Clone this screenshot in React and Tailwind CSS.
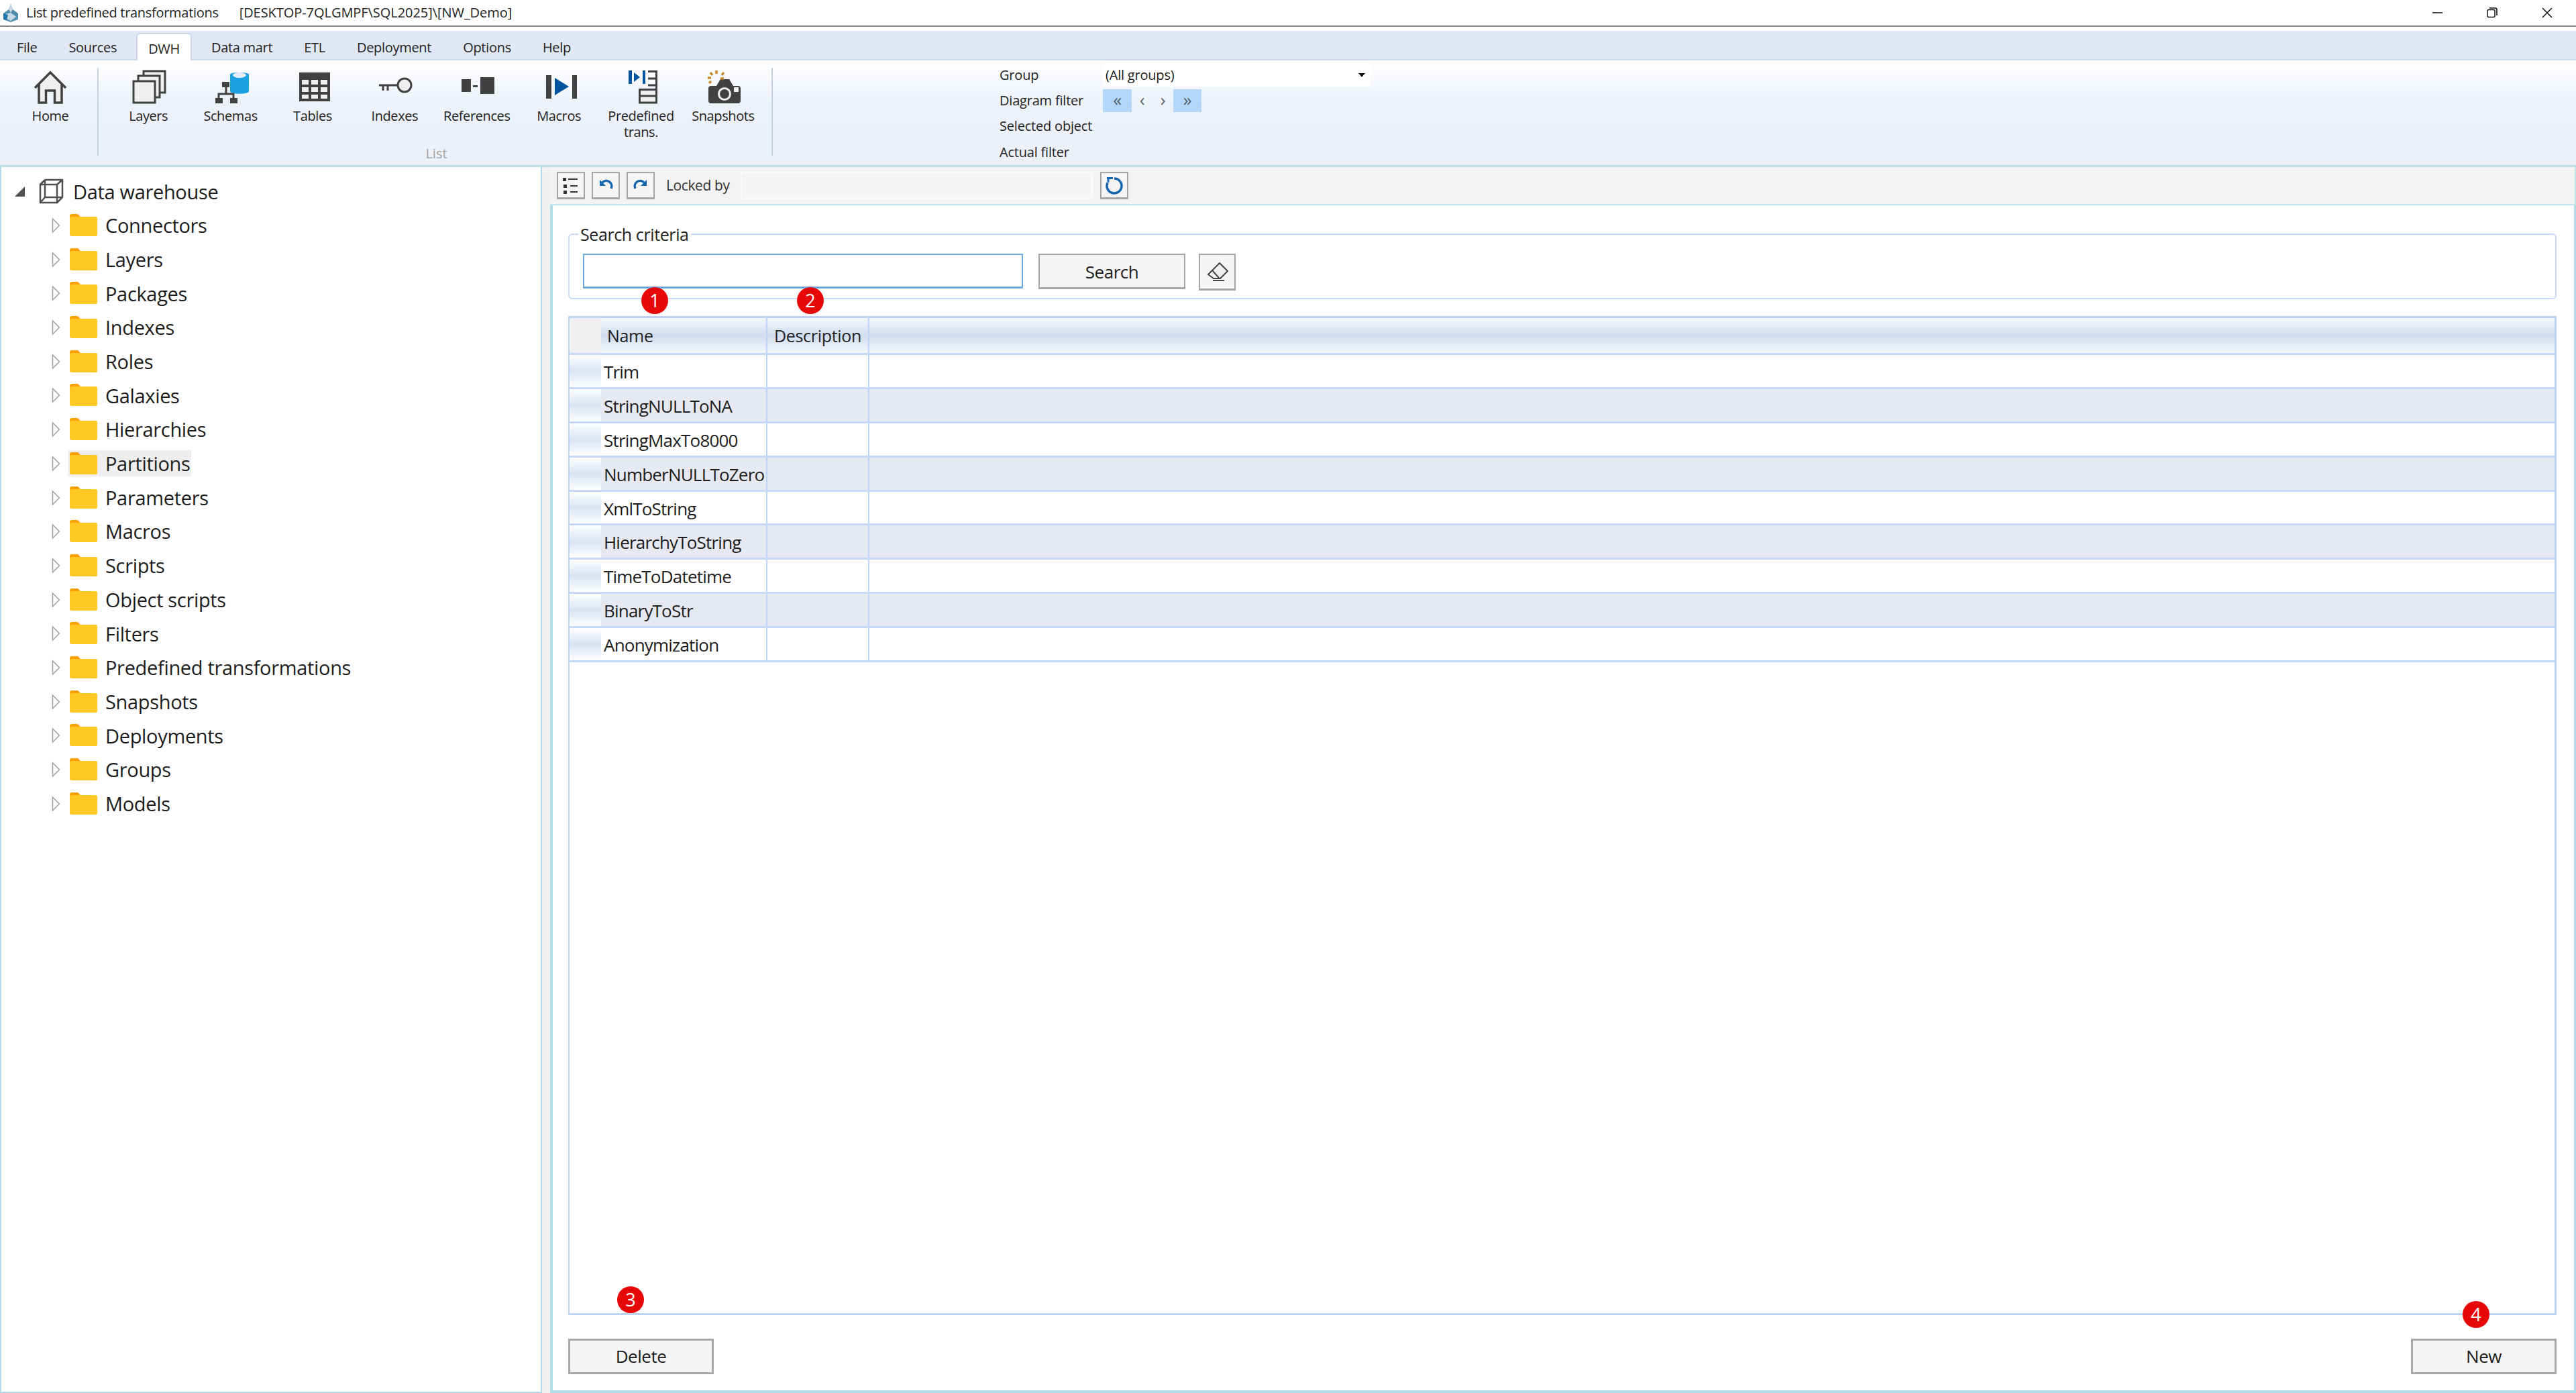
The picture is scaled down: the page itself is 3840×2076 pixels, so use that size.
const font = { fontFamily: '"Open Sans", "Noto Sans", sans-serif' };

const tabs = ["File", "Sources", "DWH", "Data mart", "ETL", "Deployment", "Options", "Help"];
const treeItems = ["Connectors", "Layers", "Packages", "Indexes", "Roles", "Galaxies", "Hierarchies", "Partitions", "Parameters", "Macros", "Scripts", "Object scripts", "Filters", "Predefined transformations", "Snapshots", "Deployments", "Groups", "Models"];
const rows = ["Trim", "StringNULLToNA", "StringMaxTo8000", "NumberNULLToZero", "XmlToString", "HierarchyToString", "TimeToDatetime", "BinaryToStr", "Anonymization"];

const D = "#414141";
const L = "#efefef";
const B = "#00539f";

const Icon = ({ children }) => (
  <svg width="64" height="56" viewBox="0 0 64 56" className="mx-auto block">{children}</svg>
);

const HomeIcon = () => (
  <Icon>
    <path d="M15 27 32 10 49 27V51H38V34H26V51H15Z" fill={L} />
    <path d="M9 29 32 6 55 29M15 24V51H25.5V33H38.5V51H49V24" fill="none" stroke={D} strokeWidth="3.5" />
  </Icon>
);
const LayersIcon = () => (
  <Icon>
    <rect x="24" y="4" width="32" height="32" fill={L} stroke={D} strokeWidth="3" />
    <rect x="16" y="11" width="32" height="32" fill={L} stroke={D} strokeWidth="3" />
    <rect x="9" y="19" width="32" height="32" fill={L} stroke={D} strokeWidth="3" />
  </Icon>
);
const SchemasIcon = () => (
  <Icon>
    <path d="M30 9C30 5 58 5 58 9V34C58 39 30 39 30 34Z" fill="#1ba1e2" />
    <ellipse cx="44" cy="10" rx="10" ry="4" fill="#e8eef5" />
    <path d="M24 28V38M13 47V38H35V47" fill="none" stroke={D} strokeWidth="3" />
    <rect x="18" y="20" width="11" height="8" fill={D} />
    <rect x="8" y="44" width="11" height="8" fill={D} />
    <rect x="30" y="44" width="11" height="8" fill={D} />
  </Icon>
);
const TablesIcon = () => (
  <Icon>
    <rect x="11" y="6" width="46" height="43" fill={D} />
    <path d="M15 17H25V24H15ZM29 17H39V24H29ZM43 17H53V24H43ZM15 28H25V35H15ZM29 28H39V35H29ZM43 28H53V35H43ZM15 39H25V45H15ZM29 39H39V45H29ZM43 39H53V45H43Z" fill={L} />
  </Icon>
);
const KeyIcon = () => (
  <Icon>
    <circle cx="46" cy="25" r="10" fill={L} stroke={D} strokeWidth="3" />
    <path d="M8 25H36M14 25V33M21 25V33" fill="none" stroke={D} strokeWidth="3" />
  </Icon>
);
const RefIcon = () => (
  <Icon>
    <rect x="8" y="16" width="14" height="19" fill={D} />
    <rect x="25" y="25" width="7" height="3" fill={D} />
    <rect x="36" y="13" width="21" height="25" fill={D} />
  </Icon>
);
const MacroIcon = () => (
  <Icon>
    <rect x="12" y="10" width="8" height="35" fill={D} />
    <path d="M25 14 46 27 25 40Z" fill={B} />
    <rect x="51" y="10" width="7" height="35" fill={D} />
  </Icon>
);
const PredefIcon = () => (
  <Icon>
    <rect x="12" y="3" width="5" height="20" fill={B} />
    <path d="M20 6 29 13 20 20Z" fill={B} />
    <rect x="33" y="3" width="4" height="20" fill={B} />
    <rect x="28.5" y="31.5" width="25" height="19.5" fill={L} />
    <path d="M41 4.5H53.5V51H28.5V31.5H53.5M41 15H53.5M41 25H53.5M28.5 41H53.5" fill="none" stroke={D} strokeWidth="3" />
  </Icon>
);
const CameraIcon = () => (
  <Icon>
    <path d="M9 30Q9 26 13 26H21L27 16H40L46 26H53Q57 26 57 30V48Q57 52 53 52H13Q9 52 9 48Z" fill={D} />
    <circle cx="33" cy="38" r="8.5" fill={D} stroke={L} strokeWidth="3" />
    <rect x="47" y="28" width="7" height="7" fill={L} />
    <path d="M21 3V8M12 6 15 10M32 6 29 10M8 14H13M27 15H32M10 22 13 19" stroke="#c88a2a" strokeWidth="3.5" fill="none" />
  </Icon>
);

const ribbonItems = [
  ["Layers", LayersIcon],
  ["Schemas", SchemasIcon],
  ["Tables", TablesIcon],
  ["Indexes", KeyIcon],
  ["References", RefIcon],
  ["Macros", MacroIcon],
  ["Predefined\ntrans.", PredefIcon],
  ["Snapshots", CameraIcon],
];

const RibbonItem = ({ label, icon: I }) => (
  <div className="w-[122.4px] shrink-0 pt-[12px] text-center">
    <I />
    <div className="-ml-[2px] mt-[3px] h-[49px] whitespace-pre-line text-[20px] leading-[24px] tracking-[-0.4px] text-[#222]">{label}</div>
  </div>
);

const Badge = ({ n, className }) => (
  <div className={"absolute flex h-[40px] w-[40px] items-center justify-center rounded-full bg-[#e60808] text-[27px] text-white " + className}>{n}</div>
);

const ToolButton = ({ children }) => (
  <div className="flex h-[41px] w-[42px] items-center justify-center border-2 border-b-[3px] border-[#a6a6a6] bg-[#f5f5f5]">
    {children}
  </div>
);

const Folder = () => (
  <svg width="42" height="34" viewBox="0 0 42 34" className="shrink-0">
    <path d="M0 3Q0 0 3 0H11Q13 0 14 2L16 4H36V8H0Z" fill="#ffa000" />
    <rect x="0" y="4" width="41" height="29" rx="2.5" fill="#ffc825" />
  </svg>
);

const TreeRow = ({ label }) => (
  <div className="flex h-[50.7px] items-center pl-[75px]">
    <svg width="13" height="24" viewBox="0 0 13 24" className="mr-[14px] shrink-0">
      <path d="M1.5 2 11.5 12 1.5 22Z" fill="#fff" stroke="#a0a0a0" strokeWidth="1.5" />
    </svg>
    <div className={"flex h-[39px] items-center pl-[3px] pr-[2px] -ml-[3px] " + (label === "Partitions" ? "bg-[#eeeeee]" : "")}>
      <Folder />
      <span className="ml-[11px] text-[29px] tracking-[-0.33px] text-[#1c1c1c]">{label}</span>
    </div>
  </div>
);

export default function App() {
  return (
    <div className="flex h-[2076px] w-[3840px] flex-col overflow-hidden bg-white" style={font}>
      {/* title bar */}
      <div className="flex h-[40px] shrink-0 items-center border-b-2 border-[#858585] pl-[3px]">
        <svg width="26" height="28" viewBox="0 0 26 28" className="shrink-0">
          <path d="M13 1 16 9 24 15 24 24 13 28 2 24 2 15 10 9Z" fill="#4f8fb0" />
          <path d="M13 1 16 9 13 14 10 9ZM5 16 13 14 21 20 13 26 5 22Z" fill="#c8d8e4" />
          <path d="M2 15 9 17 7 25 2 24Z" fill="#1f77a8" />
        </svg>
        <span className="ml-[10px] text-[20px] tracking-[-0.3px] text-[#222]">List predefined transformations</span>
        <span className="ml-[31px] text-[20px] tracking-[-0.05px] text-[#222]">[DESKTOP-7QLGMPF\SQL2025]\[NW_Demo]</span>
        <div className="ml-auto flex items-center gap-[66px] pr-[35px]">
          <svg width="15" height="16" viewBox="0 0 15 16"><path d="M0 8H15" stroke="#111" strokeWidth="1.5" /></svg>
          <svg width="16" height="16" viewBox="0 0 16 16" fill="none" stroke="#111" strokeWidth="1.5">
            <rect x="1" y="3.5" width="11" height="11" rx="2" />
            <path d="M4 1H12.5Q15 1 15 3.5V12" />
          </svg>
          <svg width="16" height="16" viewBox="0 0 16 16"><path d="M1 1 15 15M15 1 1 15" stroke="#111" strokeWidth="1.5" /></svg>
        </div>
      </div>

      {/* tabs */}
      <div className="mt-[6px] flex h-[44px] shrink-0 items-end gap-[11px] border-b-2 border-[#ccd9e9] bg-[#dfe8f4] pl-[7px]">
        {tabs.map((t) => (
          <div
            key={t}
            className={
              t === "DWH"
                ? "-mb-[2px] flex h-[41px] items-center rounded-t-md border-2 border-b-0 border-[#c9d7e9] bg-white px-[16px] pt-[5px] text-[20px] tracking-[-0.3px] text-[#222]"
                : "flex h-[39px] items-center px-[18px] pt-[5px] text-[20px] tracking-[-0.3px] text-[#222]"
            }
          >
            {t}
          </div>
        ))}
      </div>

      {/* ribbon */}
      <div className="flex h-[156px] shrink-0 bg-gradient-to-b from-white via-[#edf2fa] via-40% to-[#ecf1f9]">
        <div className="ml-[14px] w-[122px] pt-[12px] text-center">
          <HomeIcon />
          <div className="mt-[3px] text-[20px] leading-[24px] tracking-[-0.4px] text-[#222]">Home</div>
        </div>
        <div className="ml-[9px] mt-[11px] h-[131px] w-[2px] bg-[#c6d2e0]" />
        <div className="ml-[14px] flex w-[979px] flex-col">
          <div className="flex">
            {ribbonItems.map(([label, I]) => (
              <RibbonItem key={label} label={label} icon={I} />
            ))}
          </div>
          <div className="mt-[6px] text-center text-[20px] leading-[26px] text-[#a3a3a3]">List</div>
        </div>
        <div className="ml-[10px] mt-[11px] h-[131px] w-[2px] bg-[#c6d2e0]" />
        <div className="ml-[338px] mt-[3px] flex w-[560px] flex-col text-[20px] tracking-[-0.2px] text-[#222]">
          <div className="flex h-[38px] items-center">
            <span className="w-[154px]">Group</span>
            <div className="flex h-[35px] w-[399px] items-center justify-between bg-white pl-[4px] pr-[8px]">
              <span>(All groups)</span>
              <span className="h-0 w-0 border-x-[5px] border-t-[6px] border-x-transparent border-t-[#111]" />
            </div>
          </div>
          <div className="flex h-[39px] items-center">
            <span className="w-[154px]">Diagram filter</span>
            <div className="flex items-center text-[26px] leading-none text-[#56606c]">
              <div className="flex h-[34px] w-[43px] items-center justify-center bg-[#b3d7fb] pb-[4px]">«</div>
              <div className="flex h-[34px] w-[31px] items-center justify-center pb-[4px]">‹</div>
              <div className="flex h-[34px] w-[31px] items-center justify-center pb-[4px]">›</div>
              <div className="flex h-[34px] w-[42px] items-center justify-center bg-[#b3d7fb] pb-[4px]">»</div>
            </div>
          </div>
          <div className="flex h-[39px] items-center">Selected object</div>
          <div className="flex h-[39px] items-center">Actual filter</div>
        </div>
      </div>

      {/* body */}
      <div className="flex min-h-0 flex-1 border-t-[3px] border-[#bcdce8]">
        <div className="w-[808px] shrink-0 border-x-2 border-b-2 border-[#b5dde9] pt-[11px]">
          <div className="flex h-[50.7px] items-center pl-[19px]">
            <svg width="17" height="17" viewBox="0 0 17 17" className="shrink-0">
              <path d="M16 1V16H1Z" fill="#505050" />
            </svg>
            <svg width="38" height="38" viewBox="0 0 38 38" className="ml-[20px] shrink-0" fill="none" stroke="#505050" strokeWidth="2.5">
              <path d="M2 9H27V36H2ZM9 2H35V28L27 36M2 9 9 2M27 9 35 2M9 2V28H35M9 28 2 36" />
            </svg>
            <span className="ml-[13px] text-[29px] tracking-[-0.33px] text-[#1c1c1c]">Data warehouse</span>
          </div>
          {treeItems.map((t) => (
            <TreeRow key={t} label={t} />
          ))}
        </div>
        <div className="w-[12px] shrink-0 bg-[#f0f0f0]" />

        <div className="flex min-w-0 flex-1 flex-col">
          {/* toolbar */}
          <div className="flex h-[57px] shrink-0 items-center border-b-2 border-r-2 border-[#c4e4ee] bg-[#f3f3f3] pl-[10px]">
            <div className="flex gap-[10px]">
              <ToolButton>
                <svg width="28" height="28" viewBox="0 0 28 28">
                  <path d="M2 3H7V8H2ZM3 13H8V18H3ZM3 22H8V27H3Z" fill="#333" />
                  <path d="M10 5H24M13 15H24M13 24H24" stroke="#333" strokeWidth="2" />
                </svg>
              </ToolButton>
              <ToolButton>
                <svg width="24" height="24" viewBox="0 0 24 24" fill="none" stroke="#1565b0" strokeWidth="3.5">
                  <path d="M20 17A8 8 0 0 0 7 8" />
                  <path d="M3 4V13H12Z" fill="#1565b0" stroke="none" />
                </svg>
              </ToolButton>
              <ToolButton>
                <svg width="24" height="24" viewBox="0 0 24 24" fill="none" stroke="#1565b0" strokeWidth="3.5">
                  <path d="M4 17A8 8 0 0 1 17 8" />
                  <path d="M21 4V13H12Z" fill="#1565b0" stroke="none" />
                </svg>
              </ToolButton>
            </div>
            <span className="ml-[17px] w-[111px] text-[21px] tracking-[-0.4px] text-[#333]">Locked by</span>
            <div className="h-[41px] w-[525px] border-2 border-[#fbfbfb] bg-[#f5f5f5]" />
            <div className="ml-[11px]">
              <ToolButton>
                <svg width="28" height="28" viewBox="0 0 28 28" fill="none" stroke="#1565b0" strokeWidth="3.5">
                  <path d="M4 10.4A11 11 0 1 0 14 4" />
                  <path d="M3 3.5H12M5 3.5V10" strokeWidth="3" />
                </svg>
              </ToolButton>
            </div>
          </div>

          {/* list */}
          <div className="relative flex min-h-0 flex-1 flex-col border-b-4 border-l-4 border-r-[3px] border-[#b2dce8] pl-[23px] pr-[26px]">
            <fieldset className="mt-[26px] h-[114px] shrink-0 rounded-md border-2 border-[#c8daf5] pl-[20px]">
              <legend className="ml-[-7px] px-[3px] text-[25px] leading-[34px] tracking-[-0.4px] text-[#222]">Search criteria</legend>
              <div className="mt-[12px] flex items-start">
                <div className="h-[52px] w-[656px] border-2 border-b-[3px] border-[#6fa8e0] bg-white" />
                <div className="ml-[23px] flex h-[53px] w-[219px] items-center justify-center border-2 border-b-[3px] border-[#a6a6a6] bg-[#f5f5f5] pt-[3px] text-[26px] tracking-[-0.5px] text-[#1c1c1c]">
                  Search
                </div>
                <div className="ml-[20px] flex h-[55px] w-[55px] items-center justify-center border-2 border-b-[3px] border-[#a6a6a6] bg-[#f5f5f5]">
                  <svg width="32" height="28" viewBox="0 0 32 28" fill="none" stroke="#444" strokeWidth="2">
                    <path d="M19 1 31 13 20 24H10L2 18Z" fill={L} />
                    <path d="M8 12 18 23M9 27H26" />
                  </svg>
                </div>
              </div>
            </fieldset>

            <div className="mt-[25px] flex min-h-0 flex-1 flex-col border-[3px] border-l-2 border-[#bcd3f6]">
              <div className="flex h-[55px] shrink-0 border-b-[3px] border-[#c6d9f6] text-[25px] tracking-[-0.3px] text-[#222]">
                <div className="w-[47px] bg-[#f0f0f0]" />
                <div className="flex flex-1 bg-gradient-to-b from-[#f6f8fc] via-[#cfdcef] to-[#f6f8fc]">
                  <div className="flex w-[248px] items-center border-r-2 border-[#bcd3f6] pl-[9px] pt-[1px]">Name</div>
                  <div className="flex w-[152px] items-center justify-center border-r-2 border-[#bcd3f6] pt-[1px]">Description</div>
                </div>
              </div>
              {rows.map((r, i) => (
                <div key={r} className={"flex h-[50.9px] shrink-0 border-b-[3px] border-[#c6d9f6] " + (i % 2 === 1 ? "bg-[#e6e9f1]" : "bg-white")}>
                  <div className="w-[47px] bg-gradient-to-b from-white via-[#d8e3f2] to-white" />
                  <div className="flex w-[248px] items-center border-r-2 border-[#bcd3f6] pl-[4px] pt-[3px] text-[26px] tracking-[-0.8px] text-[#1c1c1c]">{r}</div>
                  <div className="w-[152px] border-r-2 border-[#bcd3f6]" />
                </div>
              ))}
            </div>

            <div className="mb-[24px] mt-[35px] flex shrink-0 justify-between">
              <div className="flex h-[53px] w-[217px] items-center justify-center border-[3px] border-[#a8a8a8] bg-[#f5f5f5] text-[26px] tracking-[-0.5px] text-[#1c1c1c]">Delete</div>
              <div className="flex h-[53px] w-[217px] items-center justify-center border-[3px] border-[#a8a8a8] bg-[#f5f5f5] text-[26px] tracking-[-0.5px] text-[#1c1c1c]">New</div>
            </div>

            <Badge n="1" className="left-[132px] top-[122px]" />
            <Badge n="2" className="left-[364px] top-[122px]" />
            <Badge n="3" className="left-[96px] top-[1611px]" />
            <Badge n="4" className="left-[2847px] top-[1633px]" />
          </div>
        </div>
      </div>
    </div>
  );
}
